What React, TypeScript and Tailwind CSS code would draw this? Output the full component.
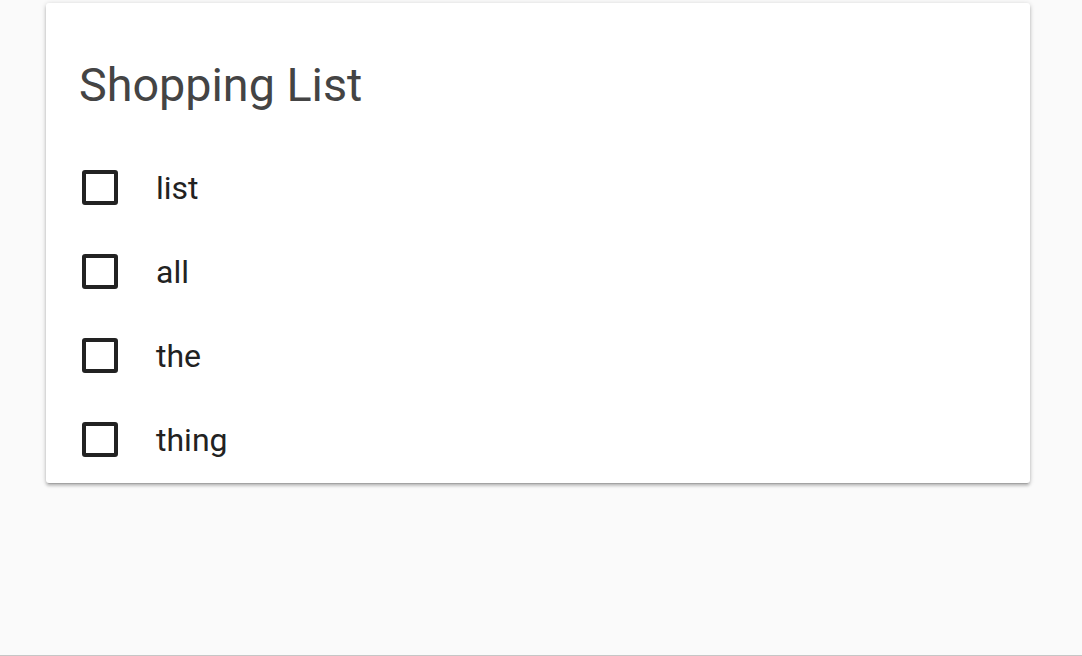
import React from 'react';

const items = ['list', 'all', 'the', 'thing'];

function Checkbox() {
  return <div className="w-[36px] h-[35px] border-[4px] border-[#222] rounded-[3px] shrink-0" />;
}

function App() {
  return (
    <div
      className="h-[656px] bg-[#fafafa] border-b border-[#c6c6c6] pt-[3px] overflow-hidden"
      style={{ fontFamily: 'Roboto, "Liberation Sans", sans-serif' }}
    >
      <div className="ml-[46px] w-[984px] bg-white rounded-[3px] shadow-[0_3px_3px_0_rgba(0,0,0,0.16),0_3px_1px_-2px_rgba(0,0,0,0.14),0_1px_5px_0_rgba(0,0,0,0.2)] pl-[33px] pb-[2px]">
        <h1 className="h-[142px] pt-[52px] text-[46.7px] leading-[60px] text-[#444] font-normal">Shopping List</h1>
        <ul>
          {items.map((item) => (
            <li key={item} className="h-[84px] flex items-center">
              <div className="ml-[3px]">
                <Checkbox />
              </div>
              <span className="ml-[38px] text-[32px] leading-[40px] pt-[2px] text-[#222]">{item}</span>
            </li>
          ))}
        </ul>
      </div>
    </div>
  );
}

export default App;
